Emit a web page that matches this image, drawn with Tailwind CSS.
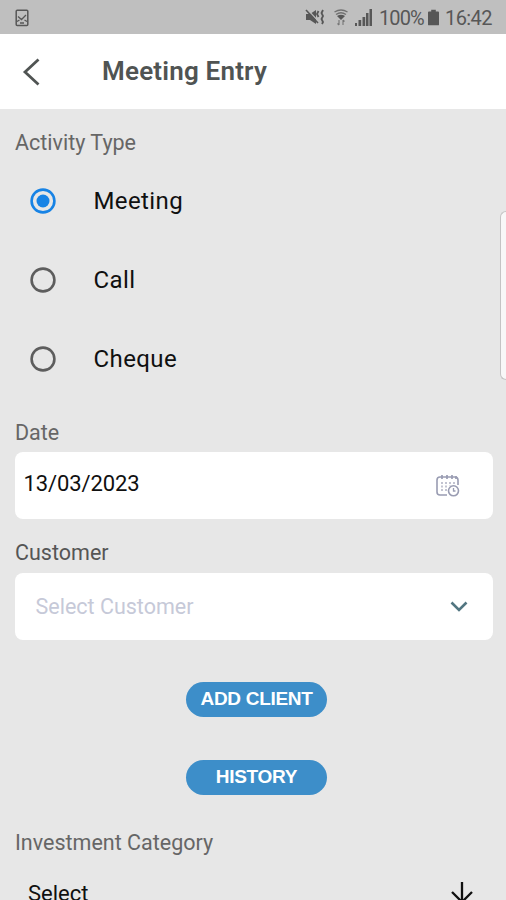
<!DOCTYPE html>
<html lang="en">
<head>
  <meta charset="UTF-8" />
  <meta name="viewport" content="width=device-width, initial-scale=1.0" />
  <title>Meeting Entry</title>
  <script src="https://cdn.jsdelivr.net/npm/@tailwindcss/browser@4"></script>
</head>
<body class="relative h-[900px] w-[506px] overflow-hidden bg-[#e7e7e7] font-['Roboto',sans-serif] text-[#101010]">

  <!-- Status bar -->
  <div class="flex h-[34px] items-center justify-between bg-[#bfbfbf] pr-[14px] pl-[15px] text-[#575757]">
    <svg class="mt-px h-[18px] w-[14px]" viewBox="0 0 14 18" fill="none" stroke="currentColor" stroke-width="1.5">
      <rect x="1.2" y="1.2" width="11.6" height="15.4" rx="1" />
      <path d="M3 7.500l3.500 3L11 6M2 12.500l2.500-1.500M12 12.500L9.500 11M5 14h4" stroke-width="1.3" />
    </svg>
    <div class="flex items-center">
      <svg class="mr-[9px] h-[18px] w-[20px]" viewBox="0 0 20 18">
        <path d="M1 6h4l6-4v14l-6-4H1z" fill="currentColor" />
        <path d="M2 1l12 13" stroke="#bfbfbf" stroke-width="1.2" />
        <path d="M1 2l12 13" stroke="currentColor" stroke-width="1.6" />
        <path d="M13.500 3l-1.500 3 1.500 3M18 2l-1.500 3L18 8l-1.500 3 1.500 3-1 2" fill="none" stroke="currentColor" stroke-width="1.8" />
      </svg>
      <svg class="mr-[7px] h-[17px] w-[14px]" viewBox="0 0 14 17" fill="none" stroke="currentColor">
        <path d="M.5 3Q7-1 13.500 3M2 5.500Q7 2 12 5.500" stroke-width="1.300" opacity=".75" />
        <path d="M3 7Q7 4.500 11 7L7 11z" fill="currentColor" stroke="none" />
        <path d="M5 11v5M3.500 14.500L5 16M9 16v-5M10.500 12.500L9 11" stroke-width="1.100" opacity=".7" />
      </svg>
      <svg class="mr-[7px] h-[17px] w-[17px]" viewBox="0 0 17 17" fill="currentColor">
        <path d="M0 14h2v3H0zM3.500 11h2.700v6H3.500zM7.500 8h2.700v9H7.500zM11 4h2.500v13H11zM14.500 0H17v17h-2.500z" />
      </svg>
      <span class="w-[46px] pt-0.5 text-[20px] tracking-[-0.9px] whitespace-nowrap">100%</span>
      <svg class="mr-[6px] ml-[3px] h-[17px] w-[11px]" viewBox="0 0 12 17" fill="currentColor">
        <path d="M3.500 0h5v2H11q1 0 1 1v13q0 1-1 1H1q-1 0-1-1V3q0-1 1-1h2.500z" />
      </svg>
      <span class="w-[47px] pt-0.5 text-[20px] tracking-[-0.6px]">16:42</span>
    </div>
  </div>

  <!-- Header -->
  <header class="flex h-[75px] items-center bg-white pl-[22px] text-[#505453]">
    <svg class="h-[28px] w-[18px]" viewBox="0 0 18 28" fill="none" stroke="currentColor" stroke-width="2.800">
      <path d="M16.500 1.500L3 14l13.500 12.500" />
    </svg>
    <h1 class="ml-[62px] text-[26px] font-semibold tracking-[0.2px]">Meeting Entry</h1>
  </header>

  <main class="px-[14px]">
    <h2 class="flex h-[53px] items-center pt-[15px] pl-px text-[21.5px] text-[#666]">Activity Type</h2>

    <div class="flex h-[79px] items-center pb-[1px] pl-[15.5px]">
      <svg class="h-[26px] w-[26px] text-[#1783e5]" viewBox="0 0 26 26" fill="none" stroke="currentColor" stroke-width="2.600">
        <circle cx="13" cy="13" r="11.400" />
        <circle cx="13" cy="13" r="6.500" fill="currentColor" stroke="none" />
      </svg>
      <span class="ml-[38px] pb-px text-[24px] tracking-[0.4px]">Meeting</span>
    </div>
    <div class="flex h-[79px] items-center pb-[2px] pl-[15.5px]">
      <svg class="h-[26px] w-[26px] text-[#5d5d5d]" viewBox="0 0 26 26" fill="none" stroke="currentColor" stroke-width="2.600">
        <circle cx="13" cy="13" r="11.400" />
      </svg>
      <span class="ml-[38px] text-[24px] tracking-[0.4px]">Call</span>
    </div>
    <div class="flex h-[79px] items-center pb-[2px] pl-[15.5px]">
      <svg class="h-[26px] w-[26px] text-[#5d5d5d]" viewBox="0 0 26 26" fill="none" stroke="currentColor" stroke-width="2.600">
        <circle cx="13" cy="13" r="11.400" />
      </svg>
      <span class="ml-[38px] text-[24px] tracking-[0.4px]">Cheque</span>
    </div>

    <!-- Date -->
    <h2 class="flex h-[53px] items-center pt-[15px] pl-px text-[21.5px] text-[#666]">Date</h2>
    <div class="mr-[-0.5px] ml-[0.5px] flex h-[67px] items-center justify-between rounded-lg bg-white pr-[33px] pl-[9px]">
      <span class="pb-[5px] text-[22px] tracking-[-0.1px]">13/03/2023</span>
      <svg class="h-[23px] w-[24px] text-[#999cb2]" viewBox="0 0 24 23" fill="none" stroke="currentColor" stroke-width="1.600">
        <path d="M11 21H4q-3 0-3-3V6q0-3 3-3h15q3 0 3 3v5" />
        <path d="M6 1v4M11 1v4M16 1v4M20 2v3" stroke-width="1.700" />
        <path d="M6 8v10M10 8v10M14 8v4M18 8v2" stroke-dasharray="2 1.500" opacity=".75" />
        <circle cx="17.500" cy="16.800" r="5" />
        <path d="M17.500 14v3h2" stroke-width="1.300" />
      </svg>
    </div>

    <!-- Customer -->
    <h2 class="flex h-[54px] items-center pt-[15px] pl-px text-[21.5px] text-[#555]">Customer</h2>
    <div class="mr-[-0.5px] ml-[0.5px] flex h-[67px] items-center justify-between rounded-lg bg-white pr-[25px] pl-[21px]">
      <span class="pt-[2px] text-[21.5px] text-[#c6c9d8]">Select Customer</span>
      <svg class="h-[12px] w-[18px] text-[#527681]" viewBox="0 0 18 12" fill="none" stroke="currentColor" stroke-width="2.600">
        <path d="M1.500 1.500L9 9l7.500-7.500" />
      </svg>
    </div>

    <div class="mt-[42px] flex flex-col items-center gap-[43px] pl-[7px] font-['Liberation_Sans',sans-serif] text-[19px] font-bold tracking-[-0.3px] text-white">
      <button class="h-[35px] w-[141px] rounded-full bg-[#3d8ec9] whitespace-nowrap">ADD CLIENT</button>
      <button class="h-[35px] w-[141px] rounded-full bg-[#3d8ec9] pb-px">HISTORY</button>
    </div>

    <!-- Investment category -->
    <h2 class="mt-[21px] flex h-[54px] items-center pl-px text-[21.5px] text-[#666]">Investment Category</h2>
    <div class="flex h-[46px] items-center justify-between pr-[19px] pl-[14px]">
      <span class="text-[22px]">Select</span>
      <svg class="h-[24px] w-[22px]" viewBox="0 0 22 24" fill="none" stroke="currentColor" stroke-width="2.300">
        <path d="M11 1v20M1 11l10 10 10-10" />
      </svg>
    </div>
  </main>

  <!-- Edge panel handle -->
  <div class="absolute top-[211px] right-0 h-[169px] w-[6px] rounded-l-md border border-r-0 border-[#c4c4c4] bg-[#f8f8f8]"></div>

</body>
</html>
